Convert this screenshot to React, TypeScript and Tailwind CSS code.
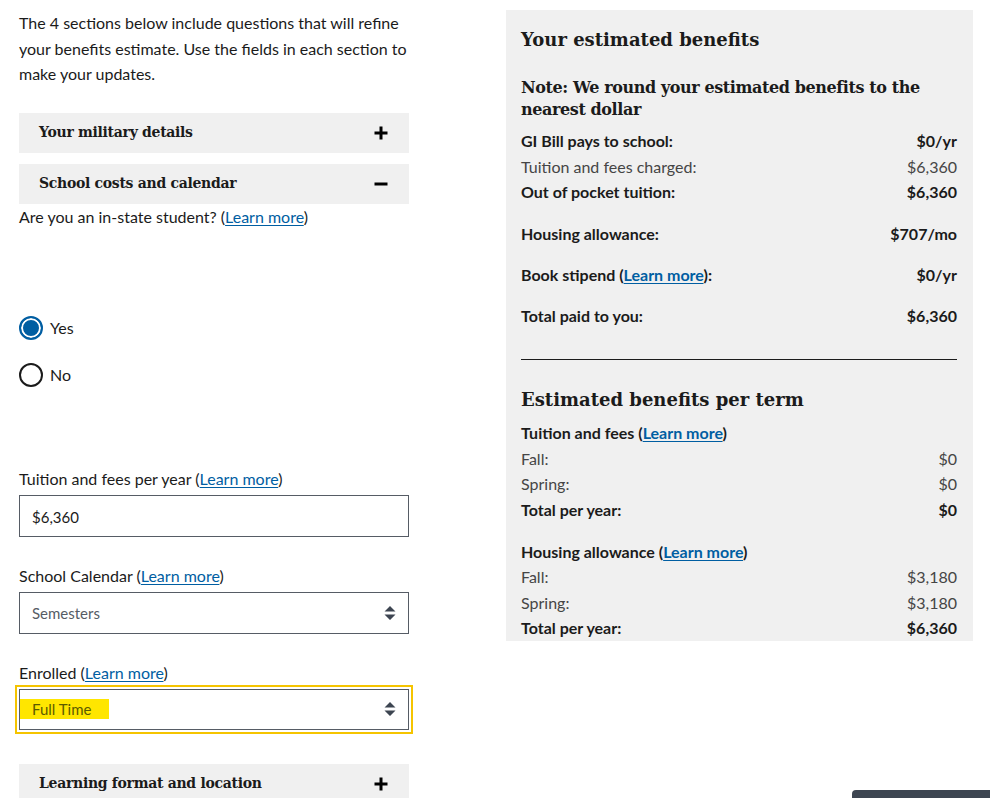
import React from 'react';

const sans = "font-['Lato','Liberation_Sans',sans-serif]";
const serif = "font-['DejaVu_Serif','Liberation_Serif',serif]";

const LearnMore = () => <a className="text-[#005ea2] underline underline-offset-2 cursor-pointer">Learn more</a>;

const Plus = () => (
  <svg width="16" height="16" viewBox="0 0 16 16" className="shrink-0">
    <path d="M6.5 1.5h3v5h5v3h-5v5h-3v-5h-5v-3h5z" fill="#000" />
  </svg>
);

const Minus = () => (
  <svg width="16" height="16" viewBox="0 0 16 16" className="shrink-0">
    <rect x="1.5" y="6.5" width="13" height="3" fill="#000" />
  </svg>
);

const SelectArrows = () => (
  <svg width="12" height="16" viewBox="0 0 12 16" className="shrink-0">
    <path d="M6 1l5.5 5.5h-11zM6 15l5.5-5.5h-11z" fill="#3d4551" />
  </svg>
);

const AccordionButton = ({ title, open }: { title: string; open?: boolean }) => (
  <div className="flex items-center justify-between bg-[#f0f0f0] h-10 pl-5 pr-5">
    <span className={`${serif} font-bold text-[14px] tracking-[-0.3px] text-[#1b1b1b]`}>{title}</span>
    {open ? <Minus /> : <Plus />}
  </div>
);

const Radio = ({ label, checked }: { label: string; checked?: boolean }) => (
  <label className="flex items-center gap-[7px]">
    {checked ? (
      <span className="w-[24px] h-[24px] rounded-full bg-[#005ea2] border-[2px] border-[#005ea2] shadow-[inset_0_0_0_2px_#fff]" />
    ) : (
      <span className="w-[24px] h-[24px] rounded-full border-[2px] border-[#1b1b1b] bg-white" />
    )}
    <span className="text-[16px] text-[#1b1b1b]">{label}</span>
  </label>
);

const Row = ({ label, value, bold, light }: { label: React.ReactNode; value: string; bold?: boolean; light?: boolean }) => (
  <div className={`flex justify-between ${bold ? 'font-bold text-[#1b1b1b]' : light ? 'text-[#454545]' : 'text-[#1b1b1b]'} text-[16px] leading-[25.5px]`}>
    <span>{label}</span>
    <span>{value}</span>
  </div>
);

export default function App() {
  return (
    <div className={`${sans} w-[990px] h-[798px] overflow-hidden bg-white relative text-[#1b1b1b]`}>
      <div className="flex items-start">
        {/* left column */}
        <div className="w-[390px] ml-[19px] pt-[10px]">
          <p className="text-[16px] leading-[25.5px]">
            The 4 sections below include questions that will refine your benefits estimate. Use the fields in each section to make your updates.
          </p>
          <div className="mt-[26px] flex flex-col gap-[11px]">
            <AccordionButton title="Your military details" />
            <AccordionButton title="School costs and calendar" open />
          </div>
          <div className="text-[16px] leading-[25px]">
            Are you an in-state student? (<LearnMore />)
          </div>
          <div className="mt-[87px] flex flex-col gap-[23px]">
            <Radio label="Yes" checked />
            <Radio label="No" />
          </div>
          <div className="mt-[79px] text-[16px] leading-[25px]">
            Tuition and fees per year (<LearnMore />)
          </div>
          <div className="mt-[4px] h-[42px] border border-[#565c65] flex items-center pl-[12px] pt-[3px] text-[15px]">
            $6,360
          </div>
          <div className="mt-[26px] text-[16px] leading-[25px]">
            School Calendar (<LearnMore />)
          </div>
          <div className="mt-[4px] h-[42px] border border-[#565c65] flex items-center justify-between pl-[12px] pr-[12px] pt-[1px] text-[15px] text-[#565c65]">
            <span>Semesters</span>
            <SelectArrows />
          </div>
          <div className="mt-[26px] text-[16px] leading-[25px]">
            Enrolled (<LearnMore />)
          </div>
          <div className="-mx-[4px] p-[2px] border-2 border-[#f5c400]">
            <div className="h-[41px] border border-[#565c65] flex items-center justify-between pr-[12px] text-[15px]">
              <span className="bg-[#ffe600] text-[#5b5b00] h-[20px] pl-[12px] pr-[18px] flex items-center">Full Time</span>
              <SelectArrows />
            </div>
          </div>
          <div className="mt-[30px]">
            <AccordionButton title="Learning format and location" />
          </div>
        </div>

        {/* right panel */}
        <div className="ml-[97px] mt-[10px] w-[467px] bg-[#f0f0f0] pl-[15px] pr-[16px] pt-[15px] pb-[0px]">
          <h2 className={`${serif} font-bold text-[18px] leading-[30px]`}>Your estimated benefits</h2>
          <h3 className={`${serif} font-bold text-[16px] tracking-[-0.4px] leading-[22px] mt-[22px]`}>
            Note: We round your estimated benefits to the nearest dollar
          </h3>
          <div className="mt-[7px]">
            <Row label="GI Bill pays to school:" value="$0/yr" bold />
            <Row label="Tuition and fees charged:" value="$6,360" light />
            <Row label="Out of pocket tuition:" value="$6,360" bold />
            <div className="h-[16px]" />
            <Row label="Housing allowance:" value="$707/mo" bold />
            <div className="h-[16px]" />
            <Row label={<>Book stipend (<LearnMore />):</>} value="$0/yr" bold />
            <div className="h-[15px]" />
            <Row label="Total paid to you:" value="$6,360" bold />
          </div>
          <div className="mt-[31px] border-t border-[#1b1b1b]" />
          <h2 className={`${serif} font-bold text-[18px] leading-[30px] mt-[25px]`}>Estimated benefits per term</h2>
          <div className="mt-[5px]">
            <div className="font-bold text-[16px] leading-[25.5px]">
              Tuition and fees (<LearnMore />)
            </div>
            <Row label="Fall:" value="$0" light />
            <Row label="Spring:" value="$0" light />
            <Row label="Total per year:" value="$0" bold />
            <div className="h-[16.5px]" />
            <div className="font-bold text-[16px] leading-[25.5px]">
              Housing allowance (<LearnMore />)
            </div>
            <Row label="Fall:" value="$3,180" light />
            <Row label="Spring:" value="$3,180" light />
            <Row label="Total per year:" value="$6,360" bold />
          </div>
        </div>
      </div>
      <div className="absolute left-[852px] top-[790px] w-[138px] h-[20px] bg-[#3d4551] rounded-tl-[4px]" />
    </div>
  );
}
